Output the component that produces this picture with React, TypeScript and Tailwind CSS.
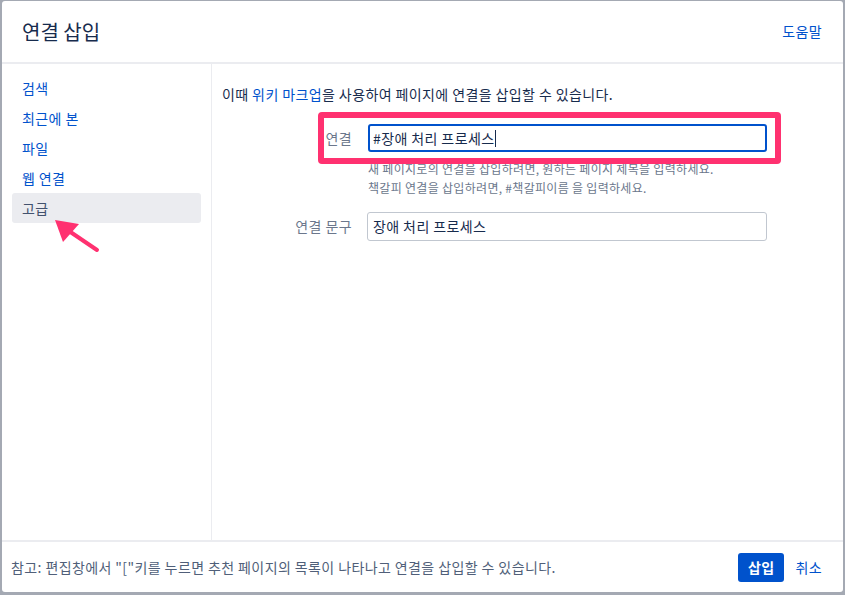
const navItems = ['검색', '최근에 본', '파일', '웹 연결', '고급']

export default function App() {
  return (
    <div
      className="relative h-[595px] w-[845px] bg-[#a4a9b3] pb-[3px] pl-[2px] pr-[2px] pt-px text-[14px] tracking-[0.4px] text-[#172b4d]"
      style={{ fontFamily: '"Noto Sans CJK KR", "Noto Sans", sans-serif' }}
    >
      <div className="flex h-full flex-col rounded-[3px] bg-white">
        {/* header */}
        <div className="flex h-[63px] items-center justify-between border-b-2 border-[#ebecf0] pl-[20px] pr-[21px]">
          <h1 className="text-[20px] font-normal leading-6 tracking-normal text-[#172b4d]">연결 삽입</h1>
          <a className="text-[14px] text-[#0052cc]">도움말</a>
        </div>

        {/* body */}
        <div className="flex flex-1">
          <div className="w-[210px] border-r border-[#ebecf0] px-[10px] pt-[9px]">
            {navItems.map((item) => {
              const selected = item === '고급'
              return (
                <div
                  key={item}
                  className={
                    selected
                      ? 'flex h-[30px] items-center rounded-[3px] bg-[#ebecf0] pl-[10px] text-[#42526e]'
                      : 'flex h-[30px] items-center pl-[10px] text-[#0052cc]'
                  }
                >
                  {item}
                </div>
              )
            })}
          </div>

          <div className="flex-1 px-[10px] pt-[20px]">
            <p className="leading-5">
              이때 <span className="text-[#0052cc]">위키 마크업</span>을 사용하여 페이지에 연결을 삽입할 수 있습니다.
            </p>

            <div className="mt-[20px] flex">
              <div className="flex h-[28px] w-[130px] items-center justify-end text-[#6b778c]">연결</div>
              <div className="ml-[16px] w-[399px]">
                <div className="flex h-[28px] items-center rounded-[3px] border-2 border-[#0052cc] px-[3px]">
                  #장애 처리 프로세스
                  <span className="ml-px h-[17px] w-px bg-[#172b4d]" />
                </div>
                <div className="mt-[7px] text-[12px] leading-[19px] tracking-[0.3px] text-[#6b778c]">
                  <div>새 페이지로의 연결을 삽입하려면, 원하는 페이지 제목을 입력하세요.</div>
                  <div>책갈피 연결을 삽입하려면, #책갈피이름 을 입력하세요.</div>
                </div>
              </div>
            </div>

            <div className="mt-[15px] flex">
              <div className="flex h-[29px] w-[130px] items-center justify-end text-[#6b778c]">연결 문구</div>
              <div className="ml-[15px] flex h-[29px] w-[400px] items-center rounded-[3px] border border-[#c1c7d0] px-[5px]">
                장애 처리 프로세스
              </div>
            </div>
          </div>
        </div>

        {/* footer */}
        <div className="flex h-[52px] items-center justify-between border-t-2 border-[#ebecf0] pl-[9px] pr-[21px]">
          <p className="text-[#505f79]">참고: 편집창에서 "["키를 누르면 추천 페이지의 목록이 나타나고 연결을 삽입할 수 있습니다.</p>
          <div className="flex items-center gap-[11px]">
            <button className="h-[29px] rounded-[3px] bg-[#0052cc] px-[10px] font-bold text-white">삽입</button>
            <button className="text-[#0052cc]">취소</button>
          </div>
        </div>
      </div>

      {/* annotation: highlight box */}
      <div className="pointer-events-none absolute left-[318px] top-[112px] h-[52px] w-[463px] rounded-[4px] border-[6px] border-[#ff3170]" />

      {/* annotation: arrow */}
      <svg className="pointer-events-none absolute left-0 top-0" width="845" height="595">
        <line x1="97" y1="250" x2="66" y2="229" stroke="#ff3170" strokeWidth="4" strokeLinecap="round" />
        <polygon points="55,220 79,224 63,242" fill="#ff3170" />
      </svg>
    </div>
  )
}
